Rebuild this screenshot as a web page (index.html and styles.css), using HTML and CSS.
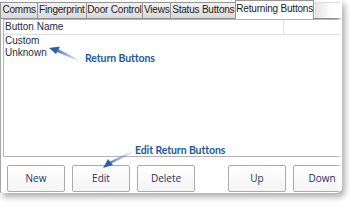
FILE: index.html
```html
<!DOCTYPE html>
<html lang="en">
<head>
    <meta charset="UTF-8">
    <title>Returning Buttons</title>
    <link rel="stylesheet" href="styles.css">
</head>
<body>
    <div class="page">
        <div class="tabs">
            <div class="tab tab-comms">Comms</div>
            <div class="tab tab-finger">Fingerprint</div>
            <div class="tab tab-door">Door Control</div>
            <div class="tab tab-views">Views</div>
            <div class="tab tab-status">Status Buttons</div>
            <div class="tab tab-return active">Returning Buttons</div>
            <div class="tab stub"></div>
        </div>

        <div class="panel">
            <div class="list">
                <div class="list-head">
                    <div class="col-name">Button Name</div>
                    <div class="col-rest"></div>
                </div>
                <div class="list-item">Custom</div>
                <div class="list-item">Unknown</div>
            </div>

            <div class="buttons">
                <div class="btn">New</div>
                <div class="btn">Edit</div>
                <div class="btn">Delete</div>
                <div class="btn far">Up</div>
                <div class="btn">Down</div>
            </div>
        </div>

        <div class="fade-right"></div>
    </div>

    <!-- callouts -->
    <svg class="arrows" width="350" height="210" viewBox="0 0 350 210">
        <defs>
            <linearGradient id="shaft1" x1="80" y1="61" x2="52" y2="49" gradientUnits="userSpaceOnUse">
                <stop offset="0" stop-color="#2a62ad" stop-opacity="0"/>
                <stop offset="1" stop-color="#2a62ad"/>
            </linearGradient>
            <linearGradient id="shaft2" x1="133" y1="151" x2="105" y2="166" gradientUnits="userSpaceOnUse">
                <stop offset="0" stop-color="#2a62ad" stop-opacity="0"/>
                <stop offset="1" stop-color="#2a62ad"/>
            </linearGradient>
        </defs>
        <polygon points="80,60 80,62 57,52 58,49" fill="url(#shaft1)"/>
        <polygon points="49,48 60,46.5 56,54" fill="#2a62ad"/>
        <polygon points="132,151 133,153 110,164 109,162" fill="url(#shaft2)"/>
        <polygon points="103,168 108,159 113,165" fill="#2a62ad"/>
    </svg>
    <div class="callout callout-list">Return Buttons</div>
    <div class="callout callout-edit">Edit Return Buttons</div>
</body>
</html>
```

FILE: styles.css
```css
body {
    margin: 0;
    padding: 0;
    width: 350px;
    height: 210px;
    overflow: hidden;
    background: #ffffff;
    font-family: "Liberation Sans", Arial, sans-serif;
    font-size: 10px;
    color: #1e2b45;
    position: relative;
}

.page {
    position: relative;
    width: 342px;
    height: 193px;
    overflow: hidden;
    background: #ffffff;
    box-shadow: 3px 4px 6px rgba(0, 0, 0, 0.32);
    border-bottom-right-radius: 6px;
}

.tabs {
    display: flex;
    align-items: flex-end;
    height: 18px;
}

.tab {
    box-sizing: border-box;
    height: 16px;
    line-height: 14px;
    text-align: center;
    white-space: nowrap;
    letter-spacing: -0.2px;
    color: #222222;
    background: linear-gradient(to bottom, #f2f2f2, #dadada);
    border: 1px solid #959595;
    border-bottom: none;
    margin-right: -1px;
}

.tab-comms { width: 41px; }
.tab-finger { width: 53px; }
.tab-door { width: 62px; }
.tab-views { width: 31px; }
.tab-status { width: 71px; }
.tab-return { width: 82px; }

.tab.active {
    height: 19px;
    line-height: 15px;
    background: #ffffff;
    position: relative;
    z-index: 1;
    margin-bottom: -1px;
}

.tab.stub {
    width: 30px;
    margin-left: 2px;
    border-color: #dddddd;
    background: linear-gradient(to right, #e6e6e6, #ffffff 60%);
}

.panel {
    border-top: 1px solid #8f8f8f;
    border-left: 1px solid #a5a5a5;
    padding-left: 2px;
    height: 180px;
}

.list {
    border: 1px solid #b3b3b3;
    border-right: none;
    height: 136px;
    background: #ffffff;
}

.list-head {
    display: flex;
    height: 14px;
    line-height: 14px;
    border-bottom: 1px solid #e0e0e0;
}

.col-name {
    width: 278px;
    padding-left: 1px;
    border-right: 1px solid #e6e6e6;
}

.list-item {
    height: 12px;
    line-height: 12px;
    padding-left: 1px;
}

.buttons {
    display: flex;
    gap: 7px;
    padding: 8px 0 0 4px;
}

.btn {
    box-sizing: border-box;
    flex: 0 0 58px;
    height: 27px;
    line-height: 25px;
    text-align: center;
    border: 1px solid #ababab;
    border-radius: 2px;
    background: linear-gradient(to bottom, #ffffff, #f4f4f4);
    color: #1d3262;
    font-family: "Open Sans", sans-serif;
    font-size: 10px;
}

.btn.far {
    margin-left: 26px;
}

.fade-right {
    position: absolute;
    top: 0;
    right: 0;
    width: 5px;
    height: 100%;
    background: linear-gradient(to right, rgba(255, 255, 255, 0), #ffffff);
}

.arrows {
    position: absolute;
    top: 0;
    left: 0;
}

.callout {
    position: absolute;
    font-family: Lato, sans-serif;
    font-weight: bold;
    font-size: 10.5px;
    line-height: 13px;
    color: #22589e;
    white-space: nowrap;
    letter-spacing: -0.1px;
}

.callout-list {
    left: 85px;
    top: 52px;
}

.callout-edit {
    left: 135px;
    top: 144px;
}
```
